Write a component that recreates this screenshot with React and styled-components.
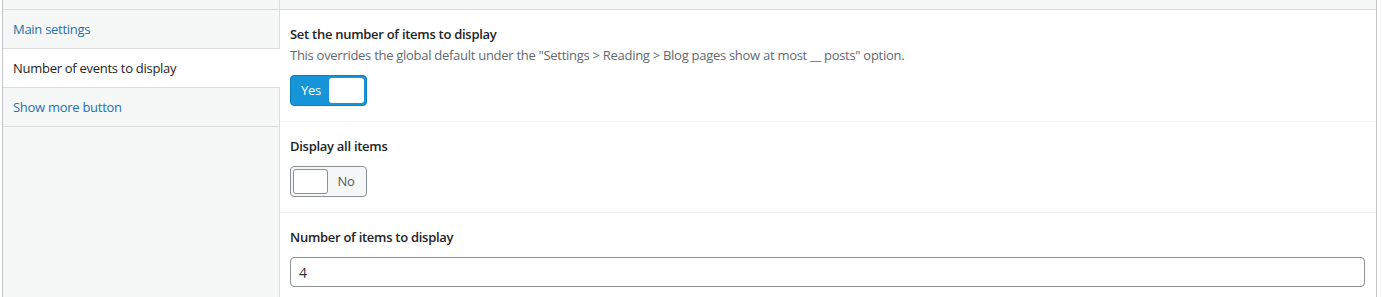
import React from "react";
import styled, { createGlobalStyle } from "styled-components";

const GlobalStyle = createGlobalStyle`
  html, body {
    margin: 0;
    padding: 0;
    background: #fff;
    overflow: hidden;
  }
  body {
    font-family: "Open Sans", "Noto Sans", "Liberation Sans", sans-serif;
    font-size: 13px;
    letter-spacing: -0.28px;
    color: #1d2327;
  }
`;

const tabs = [
  { id: "main", label: "Main settings" },
  { id: "number", label: "Number of events to display" },
  { id: "more", label: "Show more button" },
];

const Toggle = ({ on }) => (
  <Switch $on={on}>
    <SwitchLabel $on={on}>{on ? "Yes" : "No"}</SwitchLabel>
    <Knob $on={on} />
  </Switch>
);

const App = () => {
  const [active, setActive] = React.useState("number");
  return (
    <>
      <GlobalStyle />
      <Page>
        <Box>
          <Sidebar>
            <TopStrip />
            {tabs.map((tab) => (
              <Tab
                key={tab.id}
                $active={tab.id === active}
                onClick={() => setActive(tab.id)}
              >
                {tab.label}
              </Tab>
            ))}
          </Sidebar>
          <Content>
            <TopStrip />
            <Section>
              <FieldHead>
                <Title>Set the number of items to display</Title>
                <Description>
                  This overrides the global default under the "Settings &gt;
                  Reading &gt; Blog pages show at most __ posts" option.
                </Description>
              </FieldHead>
              <Toggle on />
            </Section>
            <Section>
              <FieldHead>
                <Title>Display all items</Title>
              </FieldHead>
              <Toggle on={false} />
            </Section>
            <Section>
              <FieldHead>
                <Title>Number of items to display</Title>
              </FieldHead>
              <NumberInput type="text" defaultValue="4" />
            </Section>
          </Content>
        </Box>
      </Page>
    </>
  );
};

const Page = styled.div`
  padding: 0 6px 0 2px;
`;
const Box = styled.div`
  display: flex;
  min-height: 297px;
  border-left: 1px solid #c3c4c7;
  border-right: 1px solid #c3c4c7;
`;
const Sidebar = styled.div`
  width: 276px;
  flex-shrink: 0;
  background: #f6f7f7;
  border-right: 1px solid #dcdcde;
`;
const TopStrip = styled.div`
  height: 9px;
  background: #f6f7f7;
  border-bottom: 1px solid #dcdcde;
`;
const Tab = styled.div`
  height: 38px;
  line-height: 38px;
  padding-left: 10px;
  border-bottom: 1px solid #dcdcde;
  cursor: pointer;
  color: ${(p) => (p.$active ? "#1d2327" : "#2271b1")};
  background: ${(p) => (p.$active ? "#fff" : "transparent")};
  margin-right: ${(p) => (p.$active ? "-1px" : "0")};
  position: relative;
`;
const Content = styled.div`
  flex: 1;
  background: #fff;
`;
const Section = styled.div`
  padding: 14px 11px 15px 10px;
  border-bottom: 1px solid #f0f0f1;
`;
const FieldHead = styled.div`
  display: flex;
  flex-direction: column;
  gap: 1px;
  margin-bottom: 10px;
`;
const Title = styled.div`
  font-weight: 600;
  line-height: 20px;
  color: #1d2327;
`;
const Description = styled.div`
  line-height: 20px;
  color: #646970;
`;
const Switch = styled.div`
  box-sizing: border-box;
  width: 77px;
  height: 31px;
  padding: 2px;
  display: flex;
  flex-direction: ${(p) => (p.$on ? "row" : "row-reverse")};
  align-items: center;
  justify-content: space-between;
  border-radius: 4px;
  border: 1px solid ${(p) => (p.$on ? "#0b7fbf" : "#8c8f94")};
  background: ${(p) => (p.$on ? "#1696d8" : "#f6f7f7")};
  cursor: pointer;
`;
const SwitchLabel = styled.span`
  flex: 1;
  text-align: center;
  color: ${(p) => (p.$on ? "#fff" : "#50575e")};
  line-height: 25px;
`;
const Knob = styled.span`
  box-sizing: border-box;
  width: 35px;
  height: 25px;
  border-radius: 3px;
  background: #fff;
  border: ${(p) => (p.$on ? "none" : "1px solid #8c8f94")};
`;
const NumberInput = styled.input`
  box-sizing: border-box;
  display: block;
  width: 1075px;
  height: 30px;
  padding: 0 8px;
  border: 1px solid #8c8f94;
  border-radius: 4px;
  font-family: inherit;
  font-size: 14px;
  color: #2c3338;
  background: #fff;
  outline: none;
`;

export default App;
